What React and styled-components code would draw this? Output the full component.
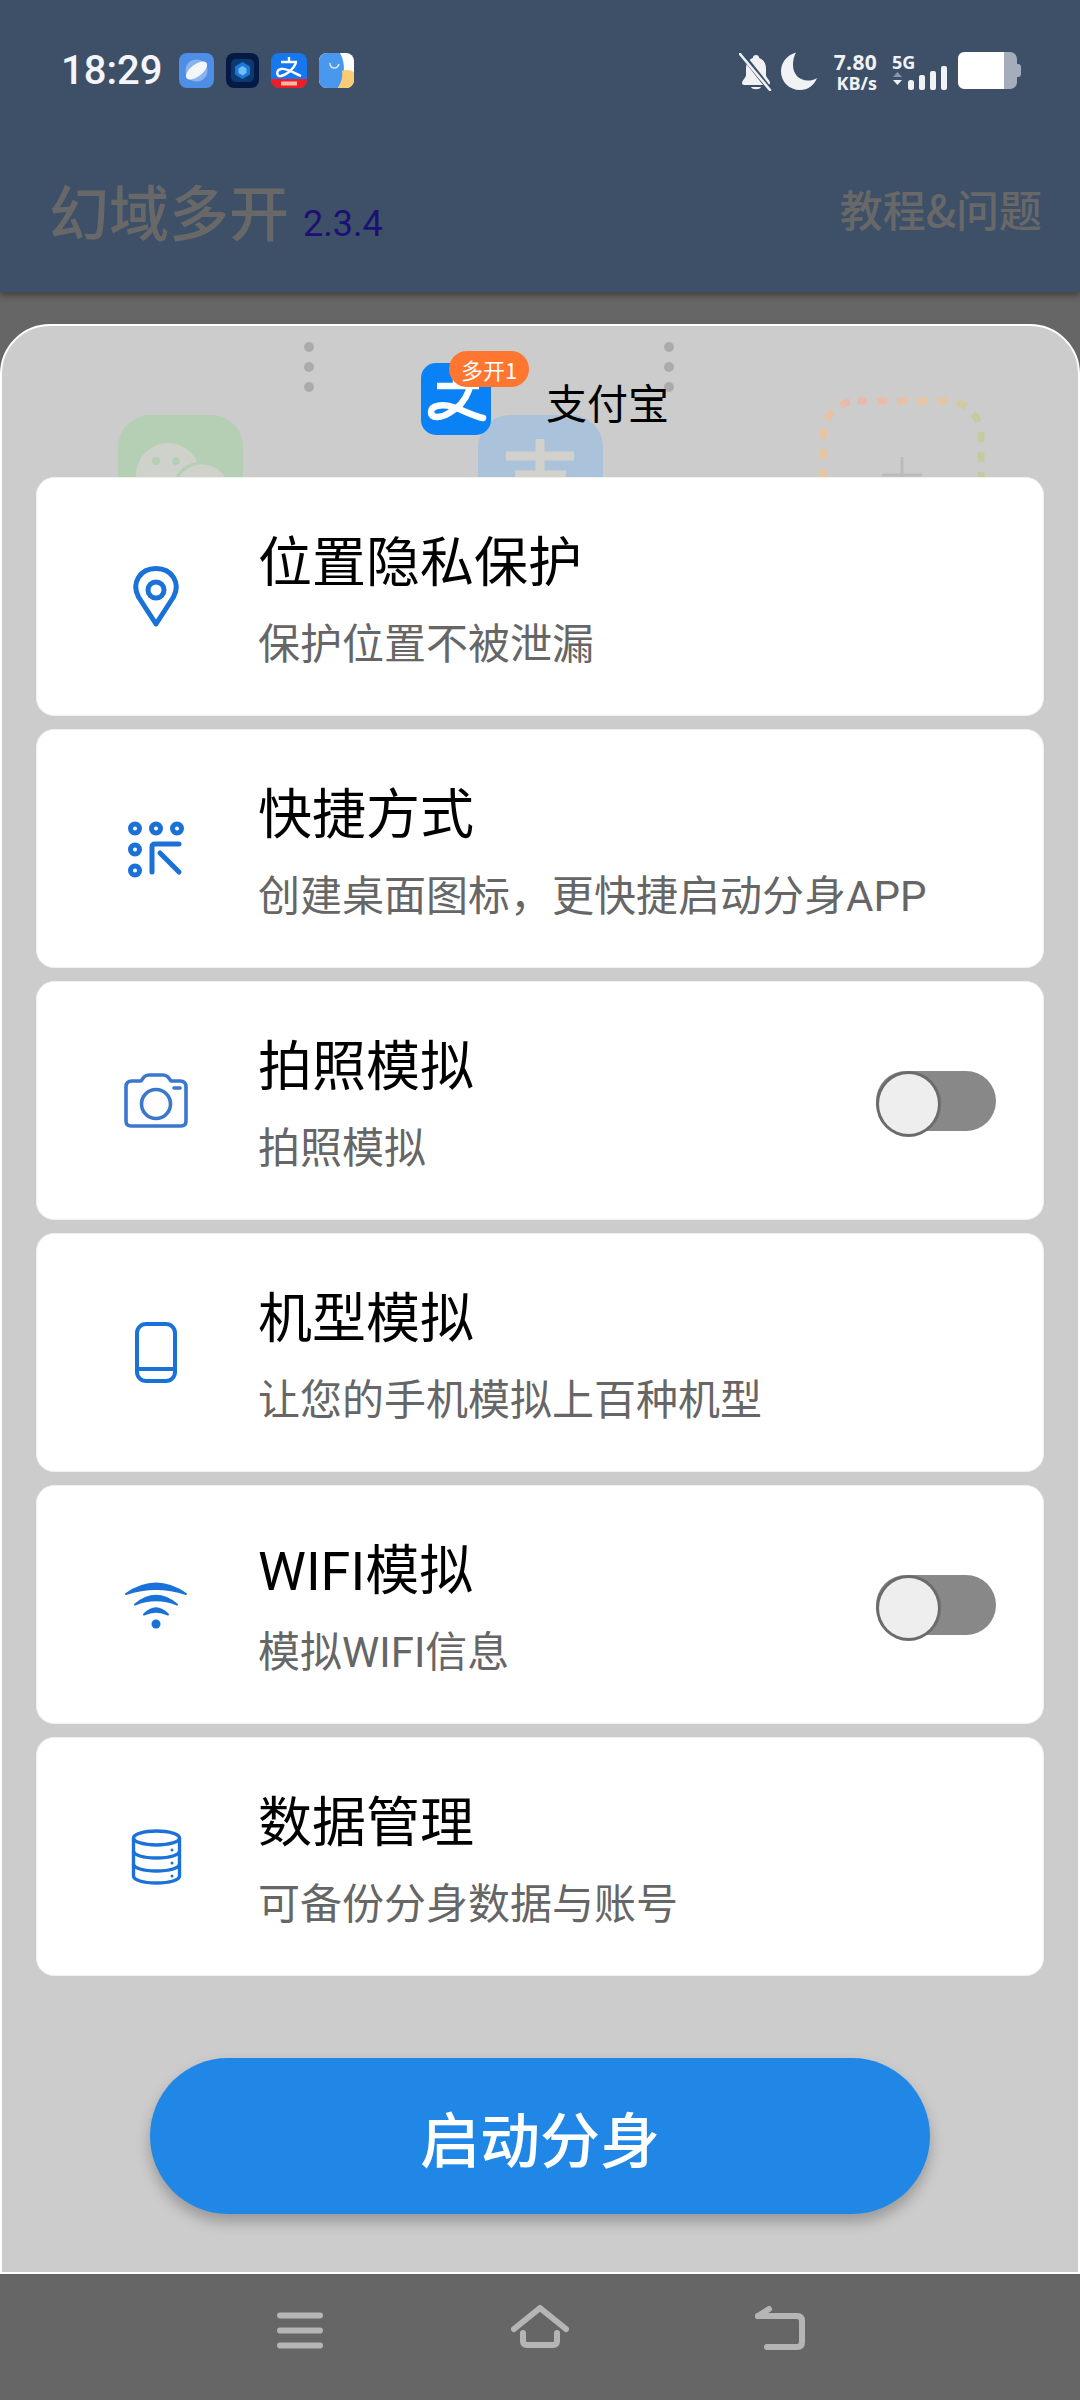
import React from 'react';
import styled, { createGlobalStyle } from 'styled-components';

const GlobalStyle = createGlobalStyle`
  html, body {
    margin: 0;
    padding: 0;
    width: 1080px;
    background: #666;
    font-family: Roboto, "Noto Sans CJK SC", sans-serif;
  }
  * { box-sizing: border-box; }
`;

const Page = styled.div`
  width: 1080px;
  height: 2400px;
  display: flex;
  flex-direction: column;
  background: #666;
  overflow: hidden;
`;

const Header = styled.header`
  position: relative;
  height: 292px;
  flex-shrink: 0;
  background: #3d5068;
  box-shadow: 0 3px 7px rgba(30, 30, 20, 0.55);
`;

const StatusBar = styled.div`
  display: flex;
  align-items: flex-start;
  justify-content: space-between;
  padding: 52px 59px 0 61px;
  height: 168px;
`;

const StatusLeft = styled.div`
  display: flex;
  align-items: center;
  height: 37px;
`;

const Clock = styled.span`
  font-size: 40px;
  font-weight: 500;
  line-height: 37px;
  color: #f3f5f9;
  margin-right: 17px;
  width: 101px;
`;

const Notices = styled.div`
  display: flex;
  gap: 12px;
`;

const StatusRight = styled.div`
  display: flex;
  align-items: flex-start;
`;

const Speed = styled.div`
  width: 46px;
  margin: 0 15px 0 14px;
  text-align: right;
  color: #f0f2f6;
  font-weight: 700;
  font-family: "Open Sans", sans-serif;
  div:first-child { font-size: 21px; line-height: 20px; letter-spacing: 0.3px; }
  div:last-child { font-size: 18px; line-height: 22px; }
`;

const Network = styled.div`
  position: relative;
  width: 56px;
  height: 38px;
  margin-right: 10px;
`;

const FiveG = styled.span`
  position: absolute;
  left: 0;
  top: 1px;
  font-family: "Open Sans", sans-serif;
  font-size: 18px;
  font-weight: 700;
  line-height: 18px;
  color: #f0f2f6;
`;

const TitleRow = styled.div`
  display: flex;
  align-items: flex-start;
  justify-content: space-between;
  padding: 0 38px 0 49px;
`;

const Brand = styled.div`
  display: flex;
  align-items: baseline;
  gap: 14px;
`;

const BrandName = styled.span`
  font-family: "Noto Sans CJK SC", sans-serif;
  font-size: 60px;
  font-weight: 500;
  line-height: 84px;
  color: #686868;
`;

const Version = styled.span`
  font-size: 36px;
  color: #1d0f73;
`;

const HelpLink = styled.span`
  font-family: "Noto Sans CJK SC", sans-serif;
  font-size: 43px;
  font-weight: 500;
  line-height: 60px;
  margin-top: 10px;
  color: #686868;
`;

const Sheet = styled.section`
  margin-top: 32px;
  height: 1950px;
  flex-shrink: 0;
  background: #ccc;
  border: 2px solid #fff;
  border-radius: 50px 50px 0 0;
  padding: 0 34px 58px;
  display: flex;
  flex-direction: column;
`;

const AppHead = styled.div`
  position: relative;
  height: 151px;
  margin: 0 -34px;
  padding: 37px 0 0 10px;
  display: flex;
  justify-content: center;
  align-items: flex-start;
  gap: 55px;
`;

const Behind = styled.div`
  position: absolute;
  inset: 0;
  overflow: hidden;
  pointer-events: none;
`;

const GhostDots = styled.div`
  position: absolute;
  top: 16px;
  left: ${({ $x }) => $x}px;
  display: flex;
  flex-direction: column;
  gap: 10px;
  span {
    width: 10px;
    height: 10px;
    border-radius: 50%;
    background: #ababab;
  }
`;

const GhostTile = styled.div`
  position: absolute;
  left: ${({ $x }) => $x}px;
  top: 89px;
  width: 125px;
  height: 140px;
  border-radius: 32px;
  background: ${({ $bg }) => $bg};
  overflow: hidden;
`;

const GhostArt = styled.div`
  position: absolute;
  left: 816px;
  top: 71px;
`;

const AppIcon = styled.div`
  position: relative;
  width: 70px;
  height: 72px;
  flex-shrink: 0;
  border-radius: 15px;
  background: #0a82f5;
`;

const Badge = styled.span`
  position: absolute;
  left: 28px;
  top: -12px;
  width: 80px;
  height: 36px;
  border-radius: 18px;
  background: #ff7631;
  color: #fff;
  font-family: "Noto Sans CJK SC", sans-serif;
  font-size: 22px;
  line-height: 36px;
  text-align: center;
`;

const AppName = styled.span`
  position: relative;
  font-family: "Noto Sans CJK SC", sans-serif;
  font-size: 41px;
  line-height: 76px;
  color: #000;
`;

const CardList = styled.div`
  display: flex;
  flex-direction: column;
  gap: 13px;
  position: relative;
`;

const Card = styled.div`
  height: 239px;
  display: flex;
  align-items: center;
  gap: 30px;
  padding: 0 47px;
  background: #fff;
  border: 1px solid #efefef;
  border-radius: 18px;
`;

const IconSlot = styled.div`
  width: 144px;
  display: flex;
  justify-content: center;
  align-items: center;
  flex-shrink: 0;
`;

const CardText = styled.div`
  flex: 1;
  padding-top: 10px;
  font-family: Roboto, "Noto Sans CJK SC", sans-serif;
`;

const CardTitle = styled.div`
  font-size: 54px;
  line-height: 62px;
  color: #000;
`;

const CardSub = styled.div`
  margin-top: 25px;
  font-size: 42px;
  line-height: 50px;
  color: #666;
`;

const Toggle = styled.div`
  position: relative;
  width: 120px;
  height: 60px;
  border-radius: 30px;
  background: #888;
  flex-shrink: 0;
  &::before {
    content: '';
    position: absolute;
    left: 0;
    top: 0;
    width: 59px;
    height: 60px;
    border-radius: 50%;
    background: #eee;
    border: 3px solid #6b6b6b;
  }
`;

const StartButton = styled.button`
  display: block;
  width: 780px;
  height: 156px;
  margin: 82px auto 0;
  border: 0;
  border-radius: 78px;
  background: #2087e6;
  color: #fff;
  font-family: "Noto Sans CJK SC", sans-serif;
  font-size: 60px;
  font-weight: 500;
  box-shadow: 0 8px 14px rgba(0, 0, 0, 0.25);
`;

const NavBar = styled.nav`
  flex: 1;
  display: flex;
  justify-content: center;
  align-items: flex-start;
  padding-top: 38px;
`;

const NavSlot = styled.div`
  width: 240px;
  display: flex;
  justify-content: center;
`;

const blue = '#1a72d8';

const PinIcon = () => (
  <svg width="48" height="62" viewBox="0 0 48 62" fill="none" stroke={blue} strokeWidth="5">
    <path d="M24 58 L6.5 31 C-1 17 8 2.5 24 2.5 C40 2.5 49 17 41.5 31 Z" strokeLinejoin="round" />
    <circle cx="24" cy="24" r="8" />
  </svg>
);

const ShortcutIcon = () => (
  <svg width="60" height="60" viewBox="0 0 60 60" fill="none" stroke={blue} strokeWidth="5" strokeLinecap="round" strokeLinejoin="round">
    <circle cx="9" cy="9.5" r="4.5" />
    <circle cx="30" cy="9.5" r="4.5" />
    <circle cx="51" cy="9.5" r="4.5" />
    <circle cx="9" cy="30.5" r="4.5" />
    <circle cx="9" cy="51.5" r="4.5" />
    <path d="M26 53 V28 Q26 25 29 25 H53" />
    <path d="M34 34 L53 53" />
  </svg>
);

const CameraIcon = () => (
  <svg width="64" height="55" viewBox="0 0 64 55" fill="none" stroke="#3b76cf" strokeWidth="3.6" strokeLinejoin="round">
    <path d="M8 8 H17 L20 4 Q22 2 25 2 H39 Q42 2 44 4 L47 8 H56 Q62 8 62 14 V48 Q62 53 57 53 H7 Q2 53 2 48 V14 Q2 8 8 8 Z" />
    <circle cx="32" cy="31" r="14.5" />
    <path d="M50 15 H56" strokeLinecap="round" />
  </svg>
);

const PhoneIcon = () => (
  <svg width="42" height="61" viewBox="0 0 42 61" fill="none" stroke={blue} strokeWidth="4">
    <rect x="2" y="2" width="38" height="57" rx="9" />
    <path d="M2 47 H40" />
  </svg>
);

const WifiIcon = () => (
  <svg width="64" height="48" viewBox="0 0 64 48" fill={blue} stroke={blue} strokeWidth="2" strokeLinejoin="round">
    <path d="M2 13 Q32 -8 62 13 Q32 3 2 13 Z" />
    <path d="M11 23.5 Q32 6 53 23.5 Q32 15 11 23.5 Z" />
    <path d="M20 33.5 Q32 21 44 33.5 Q32 28 20 33.5 Z" />
    <circle cx="32" cy="43" r="4.5" stroke="none" />
  </svg>
);

const DatabaseIcon = () => (
  <svg width="51" height="56" viewBox="0 0 51 56" fill="none" stroke={blue} strokeWidth="3.4">
    <ellipse cx="25.5" cy="9" rx="23" ry="7" />
    <path d="M2.5 9 V47 C2.5 51 12 54 25.5 54 C39 54 48.5 51 48.5 47 V9" />
    <path d="M2.5 22 C2.5 26 12 29 25.5 29 C39 29 48.5 26 48.5 22" />
    <path d="M2.5 35 C2.5 39 12 42 25.5 42 C39 42 48.5 39 48.5 35" />
    <circle cx="41" cy="21" r="1.5" fill={blue} stroke="none" />
    <circle cx="41" cy="34" r="1.5" fill={blue} stroke="none" />
    <circle cx="41" cy="47" r="1.5" fill={blue} stroke="none" />
  </svg>
);

const MenuIcon = () => (
  <svg width="46" height="37" viewBox="0 0 46 37" stroke="#b5b5b5" strokeWidth="6" strokeLinecap="round">
    <path d="M3 3.5 H43 M3 18.5 H43 M3 33.5 H43" />
  </svg>
);

const HomeIcon = () => (
  <svg width="58" height="43" viewBox="0 0 58 43" fill="none" stroke="#b5b5b5" strokeWidth="6" strokeLinecap="round" strokeLinejoin="round" style={{ marginTop: -7 }}>
    <path d="M3 24 L29 3 L55 24" />
    <path d="M12 28 V36 Q12 40 16 40 H42 Q46 40 46 36 V28" />
  </svg>
);

const BackIcon = () => (
  <svg width="50" height="44" viewBox="0 0 50 44" fill="none" stroke="#b5b5b5" strokeWidth="6" strokeLinecap="round" strokeLinejoin="round" style={{ marginTop: -6 }}>
    <path d="M3 10 H42 Q47 10 47 15 V36 Q47 41 42 41 H12" />
    <path d="M14 3 L3 10" />
  </svg>
);

const PlanetNotice = () => (
  <svg width="35" height="35" viewBox="0 0 35 35">
    <rect width="35" height="35" rx="8" fill="#4f8ee6" />
    <circle cx="17.5" cy="17.5" r="11" fill="#8ab4ee" />
    <ellipse cx="17.5" cy="17.5" rx="12.5" ry="6" fill="#f3f6fb" transform="rotate(-38 17.5 17.5)" />
  </svg>
);

const CubeNotice = () => (
  <svg width="33" height="35" viewBox="0 0 33 35">
    <rect width="33" height="35" rx="8" fill="#041a44" />
    <rect x="5" y="6" width="23" height="23" rx="5" fill="#0c3a70" />
    <path d="M16.5 9 L24 13.5 V21.5 L16.5 26 L9 21.5 V13.5 Z" fill="#1c78d8" />
    <path d="M16.5 13 L20.5 15.5 V20 L16.5 22.5 L12.5 20 V15.5 Z" fill="#6cc0f5" />
  </svg>
);

const AlipayNotice = () => (
  <svg width="36" height="35" viewBox="0 0 36 35">
    <defs>
      <clipPath id="alipay-clip"><rect width="36" height="35" rx="8" /></clipPath>
    </defs>
    <g clipPath="url(#alipay-clip)">
      <rect width="36" height="35" fill="#1677ee" />
      <rect y="26" width="36" height="9" fill="#ee1c25" />
      <rect x="10" y="28.5" width="16" height="4" fill="#f9b8a8" />
      <g fill="none" stroke="#fff" strokeWidth="2.4">
        <path d="M10 9 H26 M18 4 V9" />
        <path d="M25 10 C22 17 15 22 10 23 C5 24 5 17 10 16 C16 15 23 20 30 23" />
      </g>
    </g>
  </svg>
);

const BagNotice = () => (
  <svg width="35" height="35" viewBox="0 0 35 35">
    <defs>
      <clipPath id="bag-clip"><rect width="35" height="35" rx="8" /></clipPath>
    </defs>
    <g clipPath="url(#bag-clip)">
      <rect width="35" height="35" fill="#fff" />
      <path d="M0 0 H21 C27 10 26 26 19 35 H0 Z" fill="#4a98ee" />
      <path d="M23 18 C27 16 32 17 35 19 V35 H19 C22 30 24 24 23 18 Z" fill="#f9cc75" />
      <path d="M11 10 C11 16 18 17 20 11" fill="none" stroke="#cfe4fb" strokeWidth="1.6" />
    </g>
  </svg>
);

const MutedBell = () => (
  <svg width="34" height="38" viewBox="0 0 34 38" style={{ marginTop: 1 }}>
    <path d="M17 2 C15 2 14 3 13.8 5 C9 7 7 11 7 16 V22 C7 25 3 27 3 30 C3 31 4 32 5 32 H29 C30 32 31 31 31 30 C31 27 27 25 27 22 V16 C27 11 25 7 20.2 5 C20 3 19 2 17 2 Z" fill="#f0f2f6" />
    <path d="M12 34 C13 37 21 37 22 34 Z" fill="#f0f2f6" />
    <path d="M2 0 L32 38" stroke="#3d5068" strokeWidth="5" />
    <path d="M1 1 L31 37" stroke="#f0f2f6" strokeWidth="2.6" strokeLinecap="round" />
  </svg>
);

const Moon = () => (
  <svg width="36" height="38" viewBox="0 0 36 38" style={{ marginLeft: 8 }}>
    <path d="M15 0.5 C6 3 0 10.5 0 19.5 C0 30 8.5 38 19 38 C27 38 33 33.5 36 26 C33 28 30 28.5 27 28.5 C18 28.5 12 22 12 13 C12 8 13 4 15 0.5 Z" fill="#f0f2f6" />
  </svg>
);

const SignalBars = () => (
  <svg width="56" height="38" viewBox="0 0 56 38" style={{ position: 'absolute', left: 0, top: 0 }}>
    <path d="M1 25 L5.5 20 L10 25 Z" fill="#8796aa" />
    <path d="M1 28 H10 L5.5 33 Z" fill="#f0f2f6" />
    <rect x="16" y="28" width="6" height="10" rx="2.5" fill="#f0f2f6" />
    <rect x="27" y="23" width="6" height="15" rx="2" fill="#f0f2f6" />
    <rect x="38" y="19" width="6" height="19" rx="2" fill="#f0f2f6" />
    <rect x="49" y="14" width="6" height="24" rx="2" fill="#f0f2f6" />
  </svg>
);

const Battery = () => (
  <svg width="63" height="37" viewBox="0 0 63 37">
    <rect x="0" y="0" width="59" height="37" rx="7" fill="#a5adba" />
    <path d="M7 0 H46 V37 H7 Q0 37 0 30 V7 Q0 0 7 0 Z" fill="#fff" />
    <path d="M59 12 H60 Q63 12 63 15 V22 Q63 25 60 25 H59 Z" fill="#a5adba" />
  </svg>
);

const AlipayGlyph = () => (
  <svg width="70" height="72" viewBox="0 0 70 72" fill="none" stroke="#fff" strokeWidth="6.5">
    <path d="M16 23 H58 M35 10 V23" />
    <path d="M48 27 C44 38 36 46 28 50 C20 55 10 56 10 49 C10 42 22 41 32 44 C42 47 52 53 62 55" strokeLinecap="round" />
  </svg>
);

const DashedTile = () => (
  <svg width="170" height="84" viewBox="0 0 170 84" fill="none">
    <defs>
      <linearGradient id="dash-grad" x1="0" y1="0" x2="1" y2="0">
        <stop offset="0" stopColor="#e8c4a0" />
        <stop offset="0.2" stopColor="#e8b8ae" />
        <stop offset="0.7" stopColor="#e8c6a2" />
        <stop offset="1" stopColor="#c2cc9e" />
      </linearGradient>
    </defs>
    <rect x="5" y="4" width="158" height="150" rx="34" stroke="url(#dash-grad)" strokeWidth="7" strokeDasharray="10 10" />
    <path d="M84 60 V80 M64 78 H104" stroke="#bbb" strokeWidth="3" />
  </svg>
);

const GhostFace = () => (
  <svg width="125" height="62" viewBox="0 0 125 62">
    <circle cx="50" cy="60" r="32" fill="#cfd2cb" />
    <circle cx="38" cy="46" r="4" fill="#b5cfb5" />
    <circle cx="58" cy="46" r="4" fill="#b5cfb5" />
    <ellipse cx="84" cy="72" rx="27" ry="24" fill="#cfd2cb" stroke="#b5cfb5" strokeWidth="3" />
  </svg>
);

const GhostZhi = () => (
  <svg width="125" height="62" viewBox="0 0 125 62" fill="none" stroke="#d3d1cb" strokeWidth="9">
    <path d="M28 41 H96 M37 60 H88 M62 24 V60" />
  </svg>
);

const rows = [
  { title: '位置隐私保护', sub: '保护位置不被泄漏', icon: <PinIcon /> },
  { title: '快捷方式', sub: '创建桌面图标，更快捷启动分身APP', icon: <ShortcutIcon /> },
  { title: '拍照模拟', sub: '拍照模拟', icon: <CameraIcon />, toggle: true },
  { title: '机型模拟', sub: '让您的手机模拟上百种机型', icon: <PhoneIcon /> },
  { title: 'WIFI模拟', sub: '模拟WIFI信息', icon: <WifiIcon />, toggle: true },
  { title: '数据管理', sub: '可备份分身数据与账号', icon: <DatabaseIcon /> },
];

export default function App() {
  return (
    <Page>
      <GlobalStyle />
      <Header>
        <StatusBar>
          <StatusLeft>
            <Clock>18:29</Clock>
            <Notices>
              <PlanetNotice />
              <CubeNotice />
              <AlipayNotice />
              <BagNotice />
            </Notices>
          </StatusLeft>
          <StatusRight>
            <MutedBell />
            <Moon />
            <Speed>
              <div>7.80</div>
              <div>KB/s</div>
            </Speed>
            <Network>
              <FiveG>5G</FiveG>
              <SignalBars />
            </Network>
            <Battery />
          </StatusRight>
        </StatusBar>
        <TitleRow>
          <Brand>
            <BrandName>幻域多开</BrandName>
            <Version>2.3.4</Version>
          </Brand>
          <HelpLink>教程&amp;问题</HelpLink>
        </TitleRow>
      </Header>

      <Sheet>
        <AppHead>
          <Behind>
            <GhostDots $x={302}><span /><span /><span /></GhostDots>
            <GhostDots $x={662}><span /><span /><span /></GhostDots>
            <GhostTile $x={116} $bg="#b5cfb5"><GhostFace /></GhostTile>
            <GhostTile $x={476} $bg="#abc3da"><GhostZhi /></GhostTile>
            <GhostArt><DashedTile /></GhostArt>
          </Behind>
          <AppIcon>
            <AlipayGlyph />
            <Badge>多开1</Badge>
          </AppIcon>
          <AppName>支付宝</AppName>
        </AppHead>

        <CardList>
          {rows.map((row) => (
            <Card key={row.title}>
              <IconSlot>{row.icon}</IconSlot>
              <CardText>
                <CardTitle>{row.title}</CardTitle>
                <CardSub>{row.sub}</CardSub>
              </CardText>
              {row.toggle && <Toggle />}
            </Card>
          ))}
        </CardList>

        <StartButton>启动分身</StartButton>
      </Sheet>

      <NavBar>
        <NavSlot><MenuIcon /></NavSlot>
        <NavSlot><HomeIcon /></NavSlot>
        <NavSlot><BackIcon /></NavSlot>
      </NavBar>
    </Page>
  );
}
